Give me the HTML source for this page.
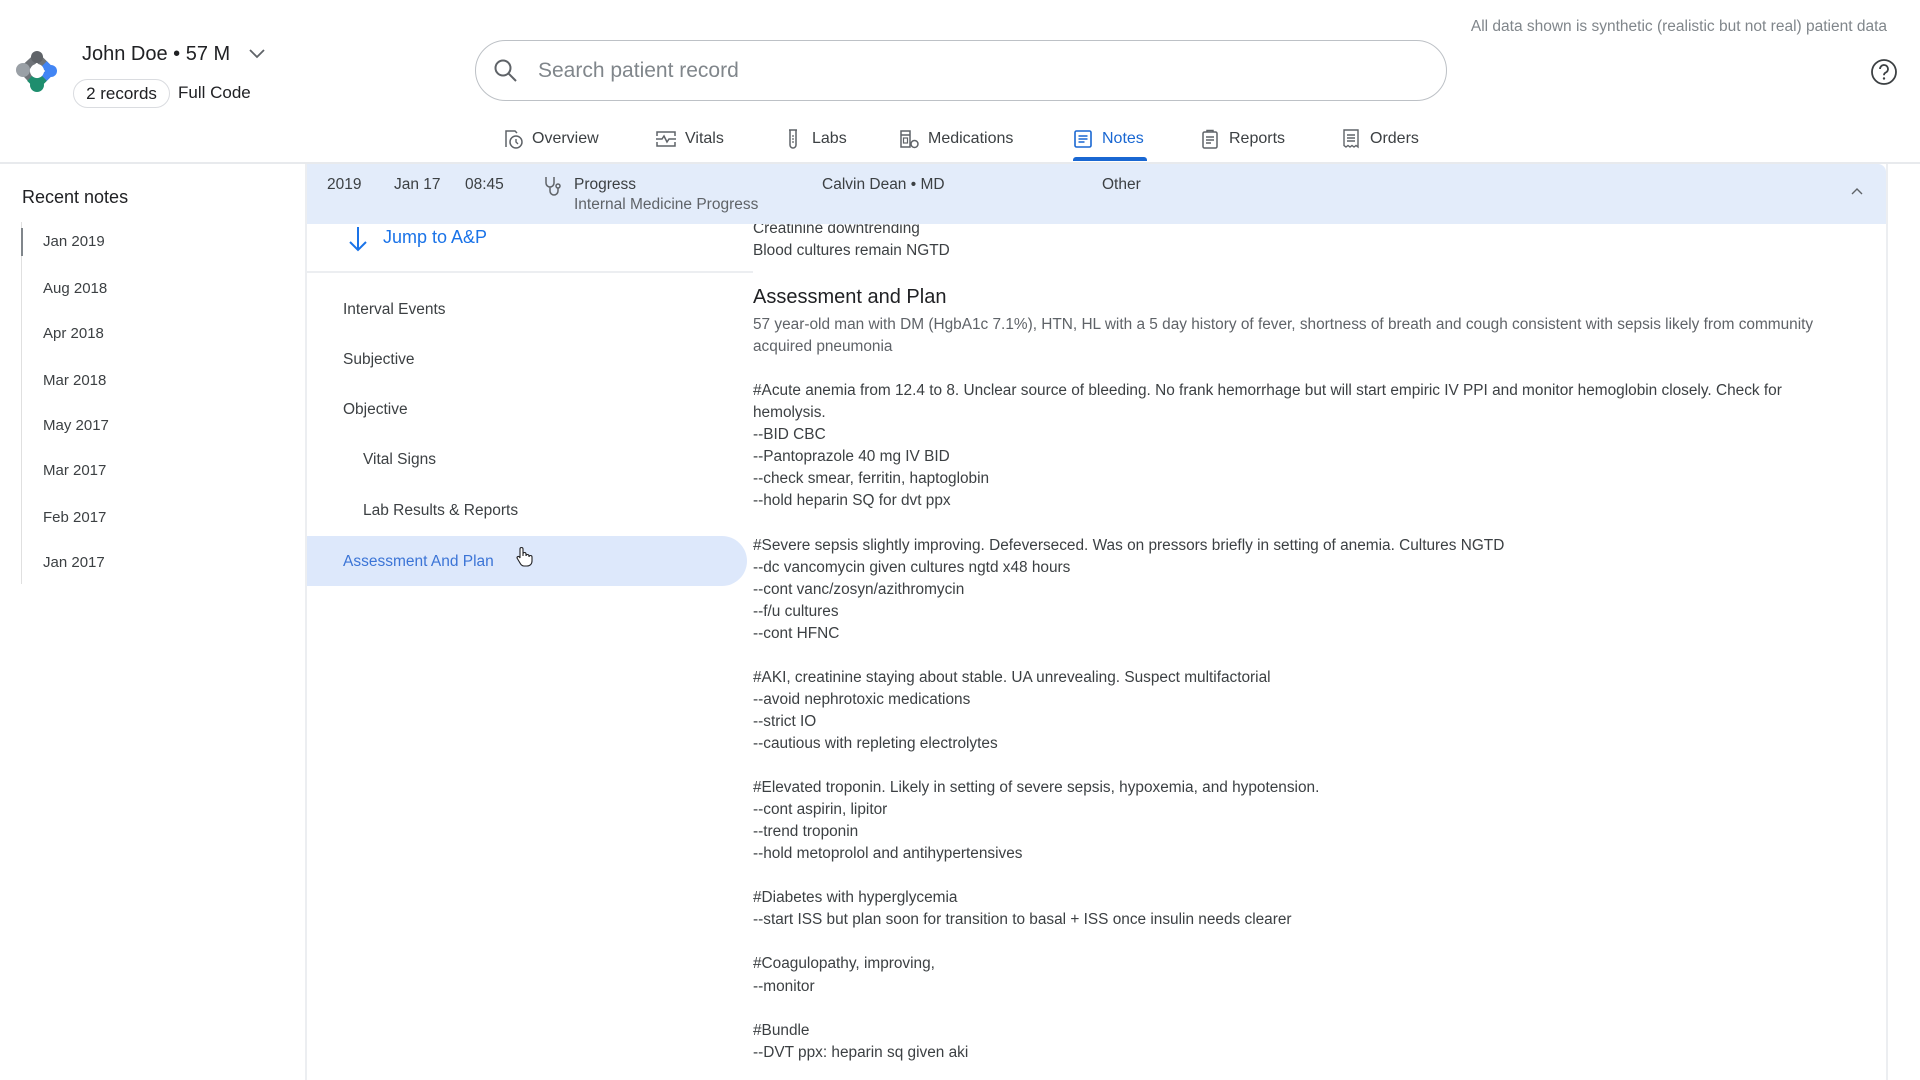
<!DOCTYPE html>
<html><head><meta charset="utf-8"><style>
*{margin:0;padding:0;box-sizing:border-box}
body{width:1920px;height:1080px;overflow:hidden;background:#fff;font-family:"Liberation Sans",Arial,sans-serif;color:#202124;position:relative}
.a{position:absolute;white-space:nowrap}
.tab{position:absolute;top:127px;font-size:16px;color:#3c4043;display:flex;align-items:center;gap:8px}
.tab svg{width:22px;height:22px}
.side{font-size:15px;color:#3c4043;left:43px}
.toc{font-size:15.5px;color:#3c4043}
#note{position:absolute;left:753px;top:218px;width:1080px;font-size:15.4px;line-height:22.04px;color:#3c4043;white-space:pre-wrap}
</style></head><body>

<!-- logo -->
<svg class="a" style="left:14px;top:48px" width="46" height="46" viewBox="0 0 46 46">
<path d="M9 22 L23 9 L37 23 L23 37Z" fill="none" stroke="#6f7378" stroke-width="8"/>
<circle cx="23" cy="9" r="6" fill="#5f6368"/>
<circle cx="9" cy="22" r="7" fill="#9aa0a6"/>
<path d="M30 16 L37 23 L30 30" fill="none" stroke="#4285f4" stroke-width="8"/>
<circle cx="37" cy="23" r="6" fill="#4285f4"/>
<path d="M16 30 L23 37 L30 30" fill="none" stroke="#1e8e6e" stroke-width="8"/>
<circle cx="23" cy="37" r="7" fill="#1e8e6e"/>
<circle cx="23" cy="23" r="7" fill="#fff"/>
</svg>

<div class="a" style="left:82px;top:43px;font-size:20px;color:#202124">John Doe • 57 M</div>
<svg class="a" style="left:248px;top:48px" width="18" height="12" viewBox="0 0 18 12"><path d="M2 2 L9 9 L16 2" fill="none" stroke="#5f6368" stroke-width="1.8"/></svg>
<div class="a" style="left:73px;top:79px;width:97px;height:29px;border:1px solid #dadce0;border-radius:15px;font-size:17px;line-height:27px;text-align:center;color:#202124">2 records</div>
<div class="a" style="left:178px;top:83px;font-size:17px;color:#202124">Full Code</div>

<!-- search -->
<div class="a" style="left:475px;top:40px;width:972px;height:61px;border:1px solid #bdc1c6;border-radius:31px"></div>
<svg class="a" style="left:493px;top:58px" width="26" height="26" viewBox="0 0 26 26"><circle cx="10" cy="10" r="7.5" fill="none" stroke="#5f6368" stroke-width="2"/><path d="M15.5 15.5 L23 23" stroke="#5f6368" stroke-width="2"/></svg>
<div class="a" style="left:538px;top:59px;font-size:21px;color:#80868b">Search patient record</div>

<div class="a" style="right:33px;top:18px;font-size:15.5px;color:#80868b">All data shown is synthetic (realistic but not real) patient data</div>
<svg class="a" style="left:1870px;top:58px" width="28" height="28" viewBox="0 0 28 28"><circle cx="14" cy="14" r="12" fill="none" stroke="#3c4043" stroke-width="1.8"/><path d="M10 11 a4 4 0 1 1 5.5 3.7 c-1 .5 -1.5 1.2 -1.5 2.5" fill="none" stroke="#3c4043" stroke-width="1.8"/><circle cx="14" cy="20.5" r="1.2" fill="#3c4043"/></svg>

<!-- tabs -->
<div class="tab" style="left:502px;top:128px"><svg viewBox="0 0 22 22"><path d="M4 19 V3 H13 L15 5" fill="none" stroke="#5f6368" stroke-width="1.5"/><circle cx="14" cy="14" r="6" fill="none" stroke="#5f6368" stroke-width="1.5"/><path d="M14 11 V14 L16 16" fill="none" stroke="#5f6368" stroke-width="1.4"/></svg>Overview</div>
<div class="tab" style="left:655px;top:128px"><svg viewBox="0 0 22 22"><path d="M2 8 V4 H20 V8 M2 14 V18 H20 V14" fill="none" stroke="#5f6368" stroke-width="1.5"/><path d="M1 11 H7 L9 8 L12 14 L14 11 H21" fill="none" stroke="#5f6368" stroke-width="1.5"/></svg>Vitals</div>
<div class="tab" style="left:782px;top:128px"><svg viewBox="0 0 22 22"><path d="M7 2 H15 M8 2 V17 a3 3 0 0 0 6 0 V2" fill="none" stroke="#5f6368" stroke-width="1.5"/><path d="M10 8 H12 M10 11 H12 M10 14 H12" stroke="#5f6368" stroke-width="1.2"/></svg>Labs</div>
<div class="tab" style="left:898px;top:128px"><svg viewBox="0 0 22 22"><path d="M3 3 H12 V19 H3Z M3 7 H12" fill="none" stroke="#5f6368" stroke-width="1.5"/><rect x="5.5" y="10" width="4" height="5" fill="none" stroke="#5f6368" stroke-width="1.2"/><circle cx="16.5" cy="16" r="3.5" fill="none" stroke="#5f6368" stroke-width="1.5"/></svg>Medications</div>
<div class="tab" style="left:1072px;top:128px;color:#1967d2"><svg viewBox="0 0 22 22"><rect x="3" y="3" width="16" height="16" rx="1.5" fill="none" stroke="#1967d2" stroke-width="1.6"/><path d="M6.5 8 H15.5 M6.5 11 H15.5 M6.5 14 H12.5" stroke="#1967d2" stroke-width="1.5"/></svg>Notes</div>
<div class="a" style="left:1073px;top:157px;width:74px;height:4px;background:#1967d2;border-radius:3px 3px 0 0"></div>
<div class="tab" style="left:1199px;top:128px"><svg viewBox="0 0 22 22"><rect x="4" y="4" width="14" height="16" rx="1.5" fill="none" stroke="#5f6368" stroke-width="1.5"/><path d="M8 4 V2.5 H14 V4" fill="none" stroke="#5f6368" stroke-width="1.5"/><path d="M7 9 H15 M7 12 H15 M7 15 H12" stroke="#5f6368" stroke-width="1.4"/></svg>Reports</div>
<div class="tab" style="left:1340px;top:128px"><svg viewBox="0 0 22 22"><path d="M4 2 H18 V19 L16 17.5 L14 19 L12 17.5 L10 19 L8 17.5 L6 19 L4 17.5Z" fill="none" stroke="#5f6368" stroke-width="1.4"/><path d="M7 7 H15 M7 10 H15 M7 13 H15" stroke="#5f6368" stroke-width="1.4"/></svg>Orders</div>
<div class="a" style="left:0;top:162px;width:1920px;height:2px;background:#e8eaed"></div>

<!-- sidebar -->
<div class="a" style="left:22px;top:187px;font-size:18px;color:#202124">Recent notes</div>
<div class="a" style="left:21px;top:222px;width:1px;height:362px;background:#e0e0e0"></div>
<div class="a" style="left:21px;top:228px;width:2px;height:28px;background:#80868b"></div>
<div class="a side" style="top:233px">Jan 2019</div>
<div class="a side" style="top:280px">Aug 2018</div>
<div class="a side" style="top:325px">Apr 2018</div>
<div class="a side" style="top:372px">Mar 2018</div>
<div class="a side" style="top:417px">May 2017</div>
<div class="a side" style="top:462px">Mar 2017</div>
<div class="a side" style="top:509px">Feb 2017</div>
<div class="a side" style="top:554px">Jan 2017</div>

<!-- main panel -->
<div class="a" style="left:305px;top:164px;width:1583px;height:916px;border-left:2px solid #eceef1;border-right:2px solid #eceef1;background:#fff"></div>
<div id="note">Creatinine downtrending
Blood cultures remain NGTD
<span style="display:block;font-size:20px;color:#202124;line-height:28px;margin:21px 0 3px">Assessment and Plan</span><span style="color:#5f6368">57 year-old man with DM (HgbA1c 7.1%), HTN, HL with a 5 day history of fever, shortness of breath and cough consistent with sepsis likely from community acquired pneumonia</span>

#Acute anemia from 12.4 to 8. Unclear source of bleeding. No frank hemorrhage but will start empiric IV PPI and monitor hemoglobin closely. Check for hemolysis.
--BID CBC
--Pantoprazole 40 mg IV BID
--check smear, ferritin, haptoglobin
--hold heparin SQ for dvt ppx

#Severe sepsis slightly improving. Defeverseced. Was on pressors briefly in setting of anemia. Cultures NGTD
--dc vancomycin given cultures ngtd x48 hours
--cont vanc/zosyn/azithromycin
--f/u cultures
--cont HFNC

#AKI, creatinine staying about stable. UA unrevealing. Suspect multifactorial
--avoid nephrotoxic medications
--strict IO
--cautious with repleting electrolytes

#Elevated troponin. Likely in setting of severe sepsis, hypoxemia, and hypotension.
--cont aspirin, lipitor
--trend troponin
--hold metoprolol and antihypertensives

#Diabetes with hyperglycemia
--start ISS but plan soon for transition to basal + ISS once insulin needs clearer

#Coagulopathy, improving,
--monitor

#Bundle
--DVT ppx: heparin sq given aki</div>

<!-- note header -->
<div class="a" style="left:307px;top:164px;width:1579px;height:60px;background:#e3ecfa;border-radius:0 8px 0 0"></div>
<div class="a" style="left:327px;top:176px;font-size:15.5px;color:#3c4043">2019</div>
<div class="a" style="left:394px;top:176px;font-size:15.5px;color:#3c4043">Jan 17</div>
<div class="a" style="left:465px;top:176px;font-size:15.5px;color:#3c4043">08:45</div>
<svg class="a" style="left:543px;top:175px" width="20" height="24" viewBox="0 0 20 24"><path d="M3 2 V8 a4 4 0 0 0 8 0 V2 M7 12 V16 a4 4 0 0 0 8 0 V13" fill="none" stroke="#5f6368" stroke-width="1.5"/><circle cx="15" cy="11" r="2" fill="none" stroke="#5f6368" stroke-width="1.5"/></svg>
<div class="a" style="left:574px;top:176px;font-size:15.5px;color:#3c4043">Progress</div>
<div class="a" style="left:574px;top:196px;font-size:15.5px;color:#5f6368">Internal Medicine Progress</div>
<div class="a" style="left:822px;top:176px;font-size:15.5px;color:#3c4043">Calvin Dean • MD</div>
<div class="a" style="left:1102px;top:176px;font-size:15.5px;color:#3c4043">Other</div>
<svg class="a" style="left:1850px;top:186px" width="14" height="10" viewBox="0 0 14 10"><path d="M2 8 L7 3 L12 8" fill="none" stroke="#5f6368" stroke-width="1.4"/></svg>

<!-- TOC -->
<div class="a" style="left:307px;top:224px;width:446px;height:856px;background:#fff"></div>
<svg class="a" style="left:348px;top:225px" width="20" height="28" viewBox="0 0 20 28"><path d="M10 2 V25 M2 17 L10 25 L18 17" fill="none" stroke="#1a73e8" stroke-width="2"/></svg>
<div class="a" style="left:383px;top:227px;font-size:18px;color:#1a73e8">Jump to A&amp;P</div>
<div class="a" style="left:307px;top:271px;width:446px;height:2px;background:#eceef1"></div>
<div class="a toc" style="left:343px;top:301px">Interval Events</div>
<div class="a toc" style="left:343px;top:351px">Subjective</div>
<div class="a toc" style="left:343px;top:401px">Objective</div>
<div class="a toc" style="left:363px;top:451px">Vital Signs</div>
<div class="a toc" style="left:363px;top:502px">Lab Results &amp; Reports</div>
<div class="a" style="left:307px;top:536px;width:440px;height:50px;background:#dde8fb;border-radius:0 25px 25px 0"></div>
<div class="a toc" style="left:343px;top:553px;color:#3b74d6">Assessment And Plan</div>
<svg class="a" style="left:515px;top:546px" width="18" height="22" viewBox="0 0 18 22"><path d="M5 12 V3 a1.5 1.5 0 0 1 3 0 V10 V8 a1.5 1.5 0 0 1 3 0 V10 a1.5 1.5 0 0 1 3 0 V11 a1.5 1.5 0 0 1 3 0 V15 c0 3 -2 5 -5 5 H9 c-2 0 -3 -1 -4 -3 L2 12 a1.4 1.4 0 0 1 2.5 -1Z" fill="#fff" stroke="#202124" stroke-width="1.1"/></svg>

</body></html>
